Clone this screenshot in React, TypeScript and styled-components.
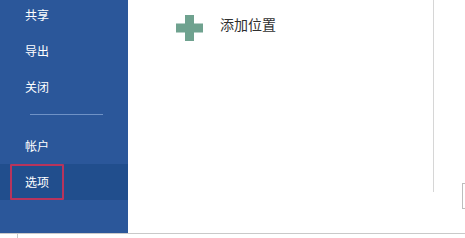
import styled, { createGlobalStyle } from "styled-components";

const GlobalStyle = createGlobalStyle`
  html, body {
    margin: 0;
    padding: 0;
    background: #ffffff;
    overflow: hidden;
  }
  body {
    font-family: "Noto Sans CJK SC", "Noto Sans", sans-serif;
  }
`;

const Frame = styled.div`
  width: 465px;
  height: 238px;
  display: flex;
  flex-direction: column;
  background: #fff;
`;

const Body = styled.div`
  display: flex;
  height: 233px;
`;

const Sidebar = styled.nav`
  position: relative;
  width: 128px;
  flex-shrink: 0;
  background: #2b579a;
  overflow: hidden;
`;

const NavList = styled.div`
  display: flex;
  flex-direction: column;
  margin-top: -3px;
`;

const NavItem = styled.div<{ active?: boolean }>`
  height: 36px;
  line-height: 36px;
  padding-left: 25px;
  font-size: 12px;
  color: #ffffff;
  background: ${(p) => (p.active ? "#214e8d" : "transparent")};
`;

const Divider = styled.div`
  height: 1px;
  margin: 9px 25px 13px 30px;
  background: #6f92c6;
`;

const Highlight = styled.div`
  position: absolute;
  left: 10px;
  top: 164px;
  width: 50px;
  height: 32px;
  border: 2px solid #b8345c;
  border-radius: 1px;
`;

const Main = styled.main`
  flex: 1;
  display: flex;
`;

const Content = styled.div`
  width: 306px;
  height: 192px;
  border-right: 1px solid #d6d6d6;
  padding: 15px 0 0 48px;
  box-sizing: border-box;
`;

const AddRow = styled.div`
  display: flex;
  align-items: center;
  gap: 17px;
`;

const AddLabel = styled.span`
  font-size: 14px;
  color: #2f2f2f;
  margin-top: -8px;
`;

const RightEdge = styled.div`
  flex: 1;
  display: flex;
  justify-content: flex-end;
  padding-top: 183px;
`;

const EdgeBox = styled.div`
  width: 2px;
  height: 24px;
  border: 1px solid #bdbdbd;
  border-right: none;
`;

const StatusBar = styled.div`
  flex: 1;
  border-top: 1px solid #c9c9c9;
  display: flex;
`;

const StatusCell = styled.div`
  width: 17px;
  border-right: 1px solid #c9c9c9;
`;

function PlusIcon() {
  return (
    <svg width="27" height="26" viewBox="0 0 27 26">
      <rect x="9" y="0" width="9" height="26" fill="#6fa28f" />
      <rect x="0" y="8.5" width="27" height="9" fill="#6fa28f" />
    </svg>
  );
}

export default function App() {
  return (
    <>
      <GlobalStyle />
      <Frame>
        <Body>
          <Sidebar>
            <NavList>
              <NavItem>共享</NavItem>
              <NavItem>导出</NavItem>
              <NavItem>关闭</NavItem>
              <Divider />
              <NavItem>帐户</NavItem>
              <NavItem active>选项</NavItem>
            </NavList>
            <Highlight />
          </Sidebar>
          <Main>
            <Content>
              <AddRow>
                <PlusIcon />
                <AddLabel>添加位置</AddLabel>
              </AddRow>
            </Content>
            <RightEdge>
              <EdgeBox />
            </RightEdge>
          </Main>
        </Body>
        <StatusBar>
          <StatusCell />
        </StatusBar>
      </Frame>
    </>
  );
}
